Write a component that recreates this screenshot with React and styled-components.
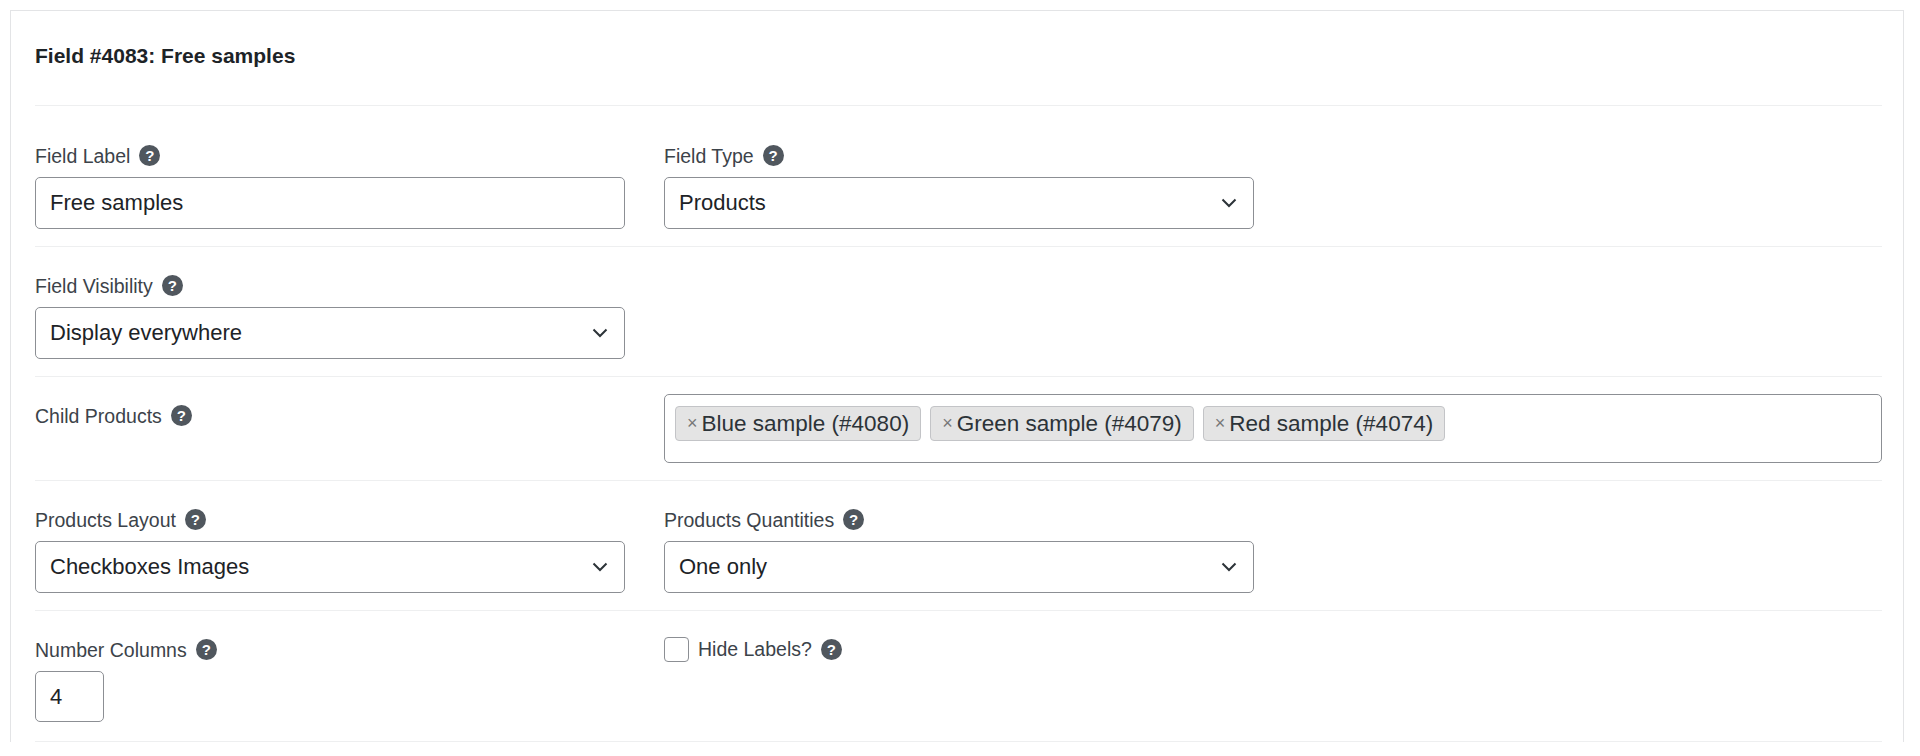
import React from "react";
import styled, { createGlobalStyle } from "styled-components";

const Global = createGlobalStyle`
  body {
    margin: 0;
    background: #fff;
    font-family: "Liberation Sans", Arial, sans-serif;
    color: #1d2327;
  }
`;

const Card = styled.div`
  margin: 10px 16px 0 10px;
  border: 1px solid #e3e4e6;
  border-bottom: none;
  padding: 0 21px 0 24px;
`;

const Header = styled.div`
  padding: 31px 0 35px;
  font-size: 21px;
  font-weight: 700;
  line-height: 28px;
  border-bottom: 1px solid #eeeff0;
`;

const Row = styled.div`
  display: grid;
  grid-template-columns: ${({ $wide }) => ($wide ? "590px 1fr" : "590px 590px")};
  column-gap: 39px;
  padding: ${({ $first }) => ($first ? "39px" : "17px")} 0 ${({ $bottom }) => $bottom || 17}px;
  border-bottom: 1px solid #eeeff0;
`;

const Cell = styled.div`
  display: flex;
  flex-direction: column;
  align-items: flex-start;
  padding-top: ${({ $pad }) => $pad || 0}px;
`;

const Label = styled.div`
  display: flex;
  align-items: center;
  gap: 9px;
  font-size: 19.5px;
  line-height: 20px;
  color: #3c434a;
  margin-bottom: 11px;
`;

const Help = styled.span`
  width: 21px;
  height: 21px;
  border-radius: 50%;
  background: #50575e;
  color: #fff;
  font-size: 15px;
  font-weight: 700;
  display: inline-flex;
  align-items: center;
  justify-content: center;
`;

const Box = styled.div`
  box-sizing: border-box;
  width: ${({ $w }) => $w || "100%"};
  height: ${({ $h }) => $h || 52}px;
  border: 1px solid #8c8f94;
  border-radius: 5px;
  display: flex;
  align-items: center;
  justify-content: space-between;
  padding: 0 16px 0 14px;
  font-size: 22px;
  color: #1d2327;
`;

const Tags = styled.div`
  box-sizing: border-box;
  width: 100%;
  height: 69px;
  border: 1px solid #8c8f94;
  border-radius: 5px;
  display: flex;
  align-items: flex-start;
  gap: 9px;
  padding: 11px 10px;
`;

const Tag = styled.span`
  display: inline-flex;
  align-items: center;
  gap: 4px;
  height: 35px;
  box-sizing: border-box;
  padding: 0 11px 0 11px;
  background: #e4e4e4;
  border: 1px solid #c3c4c7;
  border-radius: 4px;
  font-size: 22.5px;
  color: #2c3338;
  & > b {
    font-weight: 400;
    font-size: 18px;
    color: #777;
  }
`;

const CheckLine = styled.label`
  display: flex;
  align-items: center;
  gap: 9px;
  font-size: 19.5px;
  color: #3c434a;
`;

const Check = styled.span`
  width: 25px;
  height: 25px;
  box-sizing: border-box;
  border: 1px solid #8c8f94;
  border-radius: 4px;
`;

const Chevron = () => (
  <svg width="16" height="10" viewBox="0 0 16 10" fill="none">
    <path d="M1.5 1.5 8 8l6.5-6.5" stroke="#2c3338" strokeWidth="2" />
  </svg>
);

const Field = ({ label, children, pad }) => (
  <Cell $pad={pad}>
    <Label>
      {label} <Help>?</Help>
    </Label>
    {children}
  </Cell>
);

const Select = ({ value }) => (
  <Box>
    {value}
    <Chevron />
  </Box>
);

export default function App() {
  return (
    <>
      <Global />
      <Card>
        <Header>Field #4083: Free samples</Header>
        <Row $first>
          <Field label="Field Label">
            <Box>Free samples</Box>
          </Field>
          <Field label="Field Type">
            <Select value="Products" />
          </Field>
        </Row>
        <Row>
          <Field label="Field Visibility" pad={11}>
            <Select value="Display everywhere" />
          </Field>
        </Row>
        <Row $wide>
          <Field label="Child Products" pad={11} />
          <Cell>
            <Tags>
              <Tag><b>×</b>Blue sample (#4080)</Tag>
              <Tag><b>×</b>Green sample (#4079)</Tag>
              <Tag><b>×</b>Red sample (#4074)</Tag>
            </Tags>
          </Cell>
        </Row>
        <Row>
          <Field label="Products Layout" pad={11}>
            <Select value="Checkboxes Images" />
          </Field>
          <Field label="Products Quantities" pad={11}>
            <Select value="One only" />
          </Field>
        </Row>
        <Row $bottom={19}>
          <Field label="Number Columns" pad={11}>
            <Box $w="69px" $h={51}>4</Box>
          </Field>
          <Cell $pad={9}>
            <CheckLine>
              <Check />
              Hide Labels? <Help>?</Help>
            </CheckLine>
          </Cell>
        </Row>
      </Card>
    </>
  );
}
